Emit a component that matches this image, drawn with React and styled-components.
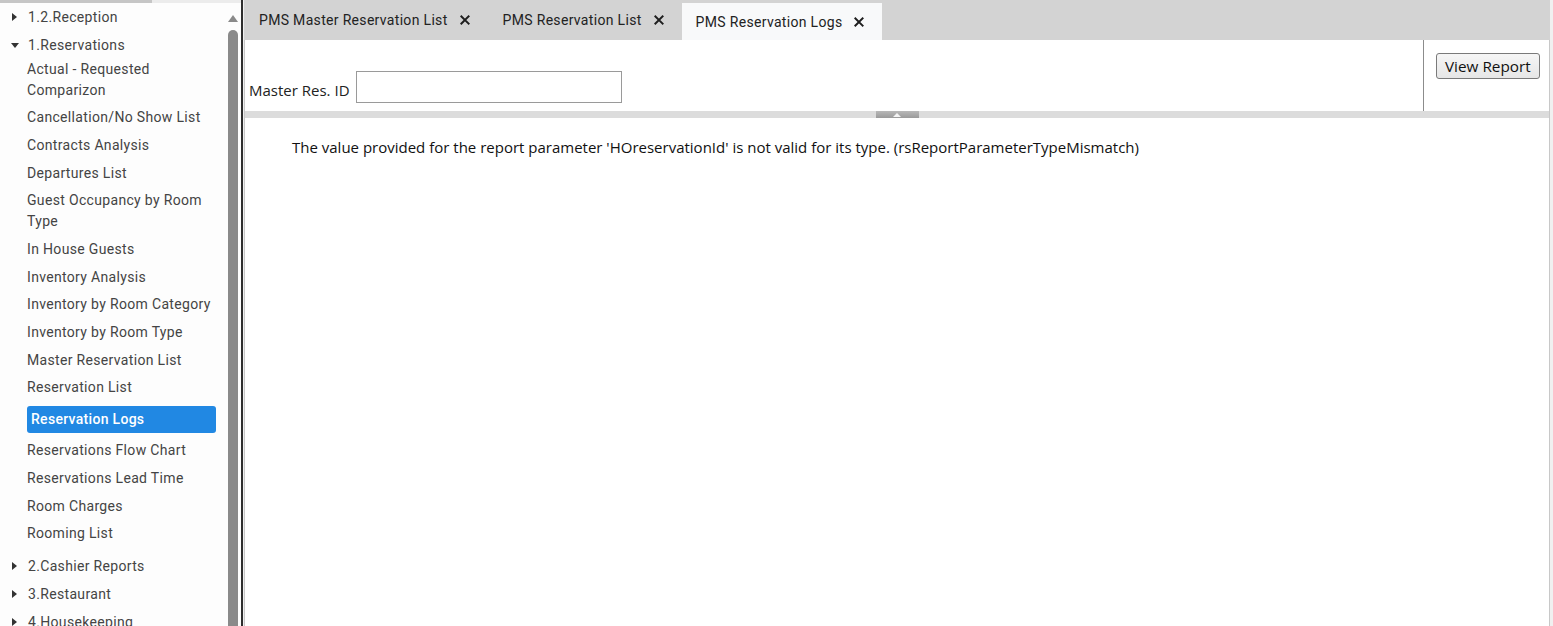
import React from 'react';
import styled, { createGlobalStyle } from 'styled-components';

const GlobalStyle = createGlobalStyle`
  html, body {
    margin: 0;
    padding: 0;
    height: 100%;
    overflow: hidden;
  }
  body {
    font-family: Roboto, 'Noto Sans', sans-serif;
    background: #ffffff;
  }
`;

const Page = styled.div`
  display: flex;
  width: 1553px;
  height: 626px;
  overflow: hidden;
`;

const Sidebar = styled.aside`
  display: flex;
  flex-direction: column;
  width: 241px;
  flex-shrink: 0;
  border-right: 2px solid #2e2e2e;
  background: #fdfdfd;
`;

const HScroll = styled.div`
  height: 3px;
  background: #ececec;
  flex-shrink: 0;

  div {
    width: 152px;
    height: 100%;
    background: #c6c6c6;
  }
`;

const SidebarBody = styled.div`
  display: flex;
  flex: 1;
  min-height: 0;
`;

const Tree = styled.ul`
  list-style: none;
  margin: 0.4px 0 0;
  padding: 0;
  flex: 1;
  overflow: hidden;
  font-size: 14px;
  color: #444;
  letter-spacing: 0.33px;
`;

const Group = styled.li`
  margin: 0;
`;

const GroupHead = styled.div`
  display: flex;
  align-items: center;
  padding: 3.5px 0 3.5px 12px;
  line-height: 21px;
  white-space: nowrap;
`;

const Caret = styled.span`
  display: inline-block;
  width: 0;
  height: 0;
  border-style: solid;
  ${p => p.$open
    ? 'border-width: 5px 4px 0 4px; border-color: #333 transparent transparent transparent; margin: 0 9px 0 -1px;'
    : 'border-width: 4px 0 4px 5px; border-color: transparent transparent transparent #333; margin-right: 11px;'}
`;

const Children = styled.ul`
  list-style: none;
  margin: -4px 0 4.4px;
  padding: 0;
`;

const Leaf = styled.li`
  padding: ${p => (p.$active ? '4.2px 10px 4.2px 27px' : '3.33px 10px 3.33px 27px')};
  line-height: 21px;
`;

const LeafLabel = styled.span`
  display: block;
  ${p => p.$active && `
    background: #2188e3;
    color: #fff;
    border-radius: 3px;
    padding: 3px 4px;
    font-weight: 500;
    letter-spacing: 0.3px;
  `}
`;

const VScroll = styled.div`
  width: 14px;
  display: flex;
  flex-direction: column;
  align-items: center;
  padding-top: 12px;
  margin-right: 1px;
  flex-shrink: 0;
`;

const UpArrow = styled.div`
  width: 0;
  height: 0;
  border-style: solid;
  border-width: 0 5.5px 7px 5.5px;
  border-color: transparent transparent #8a8a8a transparent;
`;

const Thumb = styled.div`
  margin-top: 8px;
  width: 10px;
  flex: 1;
  background: #8a8a8a;
  border-radius: 5px 5px 0 0;
`;

const Main = styled.main`
  flex: 1;
  display: flex;
  flex-direction: column;
  padding-left: 1px;
  padding-right: 3px;
  background: #f0f0f0;
  min-width: 0;
`;

const TabBar = styled.div`
  display: flex;
  align-items: flex-end;
  height: 40px;
  background: #d3d3d3;
  flex-shrink: 0;
`;

const Tab = styled.div`
  display: flex;
  align-items: center;
  gap: 12px;
  height: ${p => (p.$active ? '37px' : '40px')};
  padding: ${p => (p.$active ? '0 18px 0 14px' : '0 18px 0 15px')};
  background: ${p => (p.$active ? '#f8f9fa' : 'transparent')};
  font-size: 14px;
  color: #222;
  letter-spacing: 0.32px;
  white-space: nowrap;
`;

const CloseIcon = () => (
  <svg width="10" height="10" viewBox="0 0 10 10" style={{ display: 'block' }}>
    <path d="M1.4 1.4 L8.6 8.6 M8.6 1.4 L1.4 8.6" stroke="#1e1e1e" strokeWidth="2" strokeLinecap="square" />
  </svg>
);

const Panel = styled.section`
  flex: 1;
  display: flex;
  flex-direction: column;
  background: #fff;
  border-left: 1px solid #c8c8c8;
  border-right: 1px solid #c8c8c8;
  font-family: 'Open Sans', 'Noto Sans', sans-serif;
  min-height: 0;
`;

const Params = styled.div`
  display: flex;
  height: 71px;
  flex-shrink: 0;
`;

const ParamFields = styled.div`
  flex: 1;
  display: flex;
  align-items: flex-end;
  gap: 6px;
  padding: 0 0 8px 4px;
`;

const ParamLabel = styled.label`
  font-size: 15px;
  color: #222;
  padding-bottom: 3px;
`;

const TextBox = styled.input`
  width: 266px;
  height: 32px;
  box-sizing: border-box;
  border: 1px solid #9a9a9a;
  margin: 0;
  padding: 2px 4px;
  font-size: 15px;
`;

const ParamActions = styled.div`
  width: 126px;
  border-left: 1px solid #8c8c8c;
  padding: 13px 0 0 12px;
  box-sizing: border-box;
`;

const ViewButton = styled.button`
  height: 26px;
  padding: 0 8px;
  font-family: 'Open Sans', 'Noto Sans', sans-serif;
  font-size: 15.3px;
  color: #111;
  background: linear-gradient(#f6f6f6, #e6e6e6);
  border: 1px solid #7a7a7a;
  border-radius: 3px;
`;

const Splitter = styled.div`
  height: 7px;
  background: #dcdcdc;
  display: flex;
  justify-content: center;
  flex-shrink: 0;
`;

const Handle = styled.div`
  width: 43px;
  height: 7px;
  background: linear-gradient(#b8b8b8, #9a9a9a);
  display: flex;
  justify-content: center;
  align-items: center;

  span {
    width: 0;
    height: 0;
    border-style: solid;
    border-width: 0 4px 4px 4px;
    border-color: transparent transparent #f4f4f4 transparent;
  }
`;

const Report = styled.div`
  flex: 1;
  padding: 19px 0 0 47px;
  font-size: 15px;
  color: #111;
`;

const reservationItems = [
  'Actual - Requested Comparizon',
  'Cancellation/No Show List',
  'Contracts Analysis',
  'Departures List',
  'Guest Occupancy by Room Type',
  'In House Guests',
  'Inventory Analysis',
  'Inventory by Room Category',
  'Inventory by Room Type',
  'Master Reservation List',
  'Reservation List',
  'Reservation Logs',
  'Reservations Flow Chart',
  'Reservations Lead Time',
  'Room Charges',
  'Rooming List',
];

const groupsAfter = ['2.Cashier Reports', '3.Restaurant', '4.Housekeeping'];

const tabs = [
  { title: 'PMS Master Reservation List' },
  { title: 'PMS Reservation List' },
  { title: 'PMS Reservation Logs', active: true },
];

export default function App() {
  return (
    <>
      <GlobalStyle />
      <Page>
        <Sidebar>
          <HScroll><div /></HScroll>
          <SidebarBody>
            <Tree>
              <Group>
                <GroupHead><Caret />1.2.Reception</GroupHead>
              </Group>
              <Group>
                <GroupHead><Caret $open />1.Reservations</GroupHead>
                <Children>
                  {reservationItems.map(item => {
                    const active = item === 'Reservation Logs';
                    return (
                      <Leaf key={item} $active={active}>
                        <LeafLabel $active={active}>{item}</LeafLabel>
                      </Leaf>
                    );
                  })}
                </Children>
              </Group>
              {groupsAfter.map(name => (
                <Group key={name}>
                  <GroupHead><Caret />{name}</GroupHead>
                </Group>
              ))}
            </Tree>
            <VScroll>
              <UpArrow />
              <Thumb />
            </VScroll>
          </SidebarBody>
        </Sidebar>

        <Main>
          <TabBar>
            {tabs.map(t => (
              <Tab key={t.title} $active={t.active}>
                {t.title}
                <CloseIcon />
              </Tab>
            ))}
          </TabBar>
          <Panel>
            <Params>
              <ParamFields>
                <ParamLabel>Master Res. ID</ParamLabel>
                <TextBox type="text" />
              </ParamFields>
              <ParamActions>
                <ViewButton>View Report</ViewButton>
              </ParamActions>
            </Params>
            <Splitter>
              <Handle><span /></Handle>
            </Splitter>
            <Report>
              The value provided for the report parameter 'HOreservationId' is not valid for its type. (rsReportParameterTypeMismatch)
            </Report>
          </Panel>
        </Main>
      </Page>
    </>
  );
}
